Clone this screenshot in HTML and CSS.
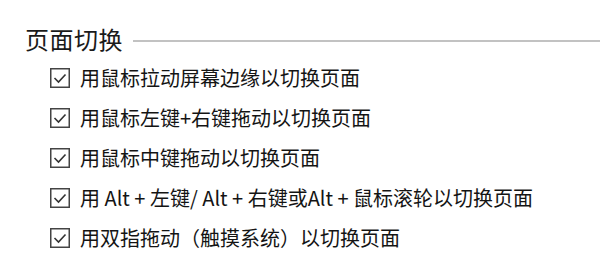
FILE: index.html
```html
<!DOCTYPE html>
<html lang="zh-CN">
<head>
<meta charset="utf-8">
<link rel="stylesheet" href="styles.css">
</head>
<body>
<section class="group">
  <div class="group-head">
    <span class="group-title">页面切换</span>
    <span class="group-line"></span>
  </div>
  <ul class="options">
    <li class="option"><svg class="check" width="20" height="20" viewBox="0 0 20 20"><rect x="0.75" y="0.75" width="18.5" height="18.5"/><polyline points="4.5,10 8.5,14 15.5,6.5"/></svg><span>用鼠标拉动屏幕边缘以切换页面</span></li>
    <li class="option"><svg class="check" width="20" height="20" viewBox="0 0 20 20"><rect x="0.75" y="0.75" width="18.5" height="18.5"/><polyline points="4.5,10 8.5,14 15.5,6.5"/></svg><span>用鼠标左键+右键拖动以切换页面</span></li>
    <li class="option"><svg class="check" width="20" height="20" viewBox="0 0 20 20"><rect x="0.75" y="0.75" width="18.5" height="18.5"/><polyline points="4.5,10 8.5,14 15.5,6.5"/></svg><span>用鼠标中键拖动以切换页面</span></li>
    <li class="option"><svg class="check" width="20" height="20" viewBox="0 0 20 20"><rect x="0.75" y="0.75" width="18.5" height="18.5"/><polyline points="4.5,10 8.5,14 15.5,6.5"/></svg><span>用 Alt + 左键/ Alt + 右键或Alt + 鼠标滚轮以切换页面</span></li>
    <li class="option"><svg class="check" width="20" height="20" viewBox="0 0 20 20"><rect x="0.75" y="0.75" width="18.5" height="18.5"/><polyline points="4.5,10 8.5,14 15.5,6.5"/></svg><span>用双指拖动（触摸系统）以切换页面</span></li>
  </ul>
</section>
</body>
</html>
```
FILE: styles.css
```css
html, body {
  margin: 0;
  padding: 0;
  background: #ffffff;
}
body {
  font-family: "Noto Sans CJK SC", "Noto Sans", sans-serif;
  color: #141414;
  width: 600px;
  height: 279px;
  overflow: hidden;
}
.group {
  padding-top: 24px;
}
.group-head {
  display: flex;
  align-items: center;
  gap: 10px;
  padding-left: 25px;
  height: 30px;
}
.group-title {
  font-size: 24px;
  line-height: 30px;
  color: #1a1a1a;
  letter-spacing: 0.5px;
}
.group-line {
  flex: 1;
  height: 2px;
  background: #c2c2c2;
  margin-top: 4px;
}
.options {
  list-style: none;
  margin: 4px 0 0 0;
  padding: 0 0 0 50px;
}
.option {
  display: flex;
  align-items: center;
  gap: 10px;
  height: 40px;
  font-size: 20px;
  line-height: 40px;
  white-space: nowrap;
}
.check {
  display: block;
  width: 20px;
  height: 20px;
  min-width: 20px;
  flex: 0 0 20px;
}
.check rect {
  fill: #fff;
  stroke: #444444;
  stroke-width: 1.5;
}
.check polyline {
  fill: none;
  stroke: #333333;
  stroke-width: 1.6;
}
```
